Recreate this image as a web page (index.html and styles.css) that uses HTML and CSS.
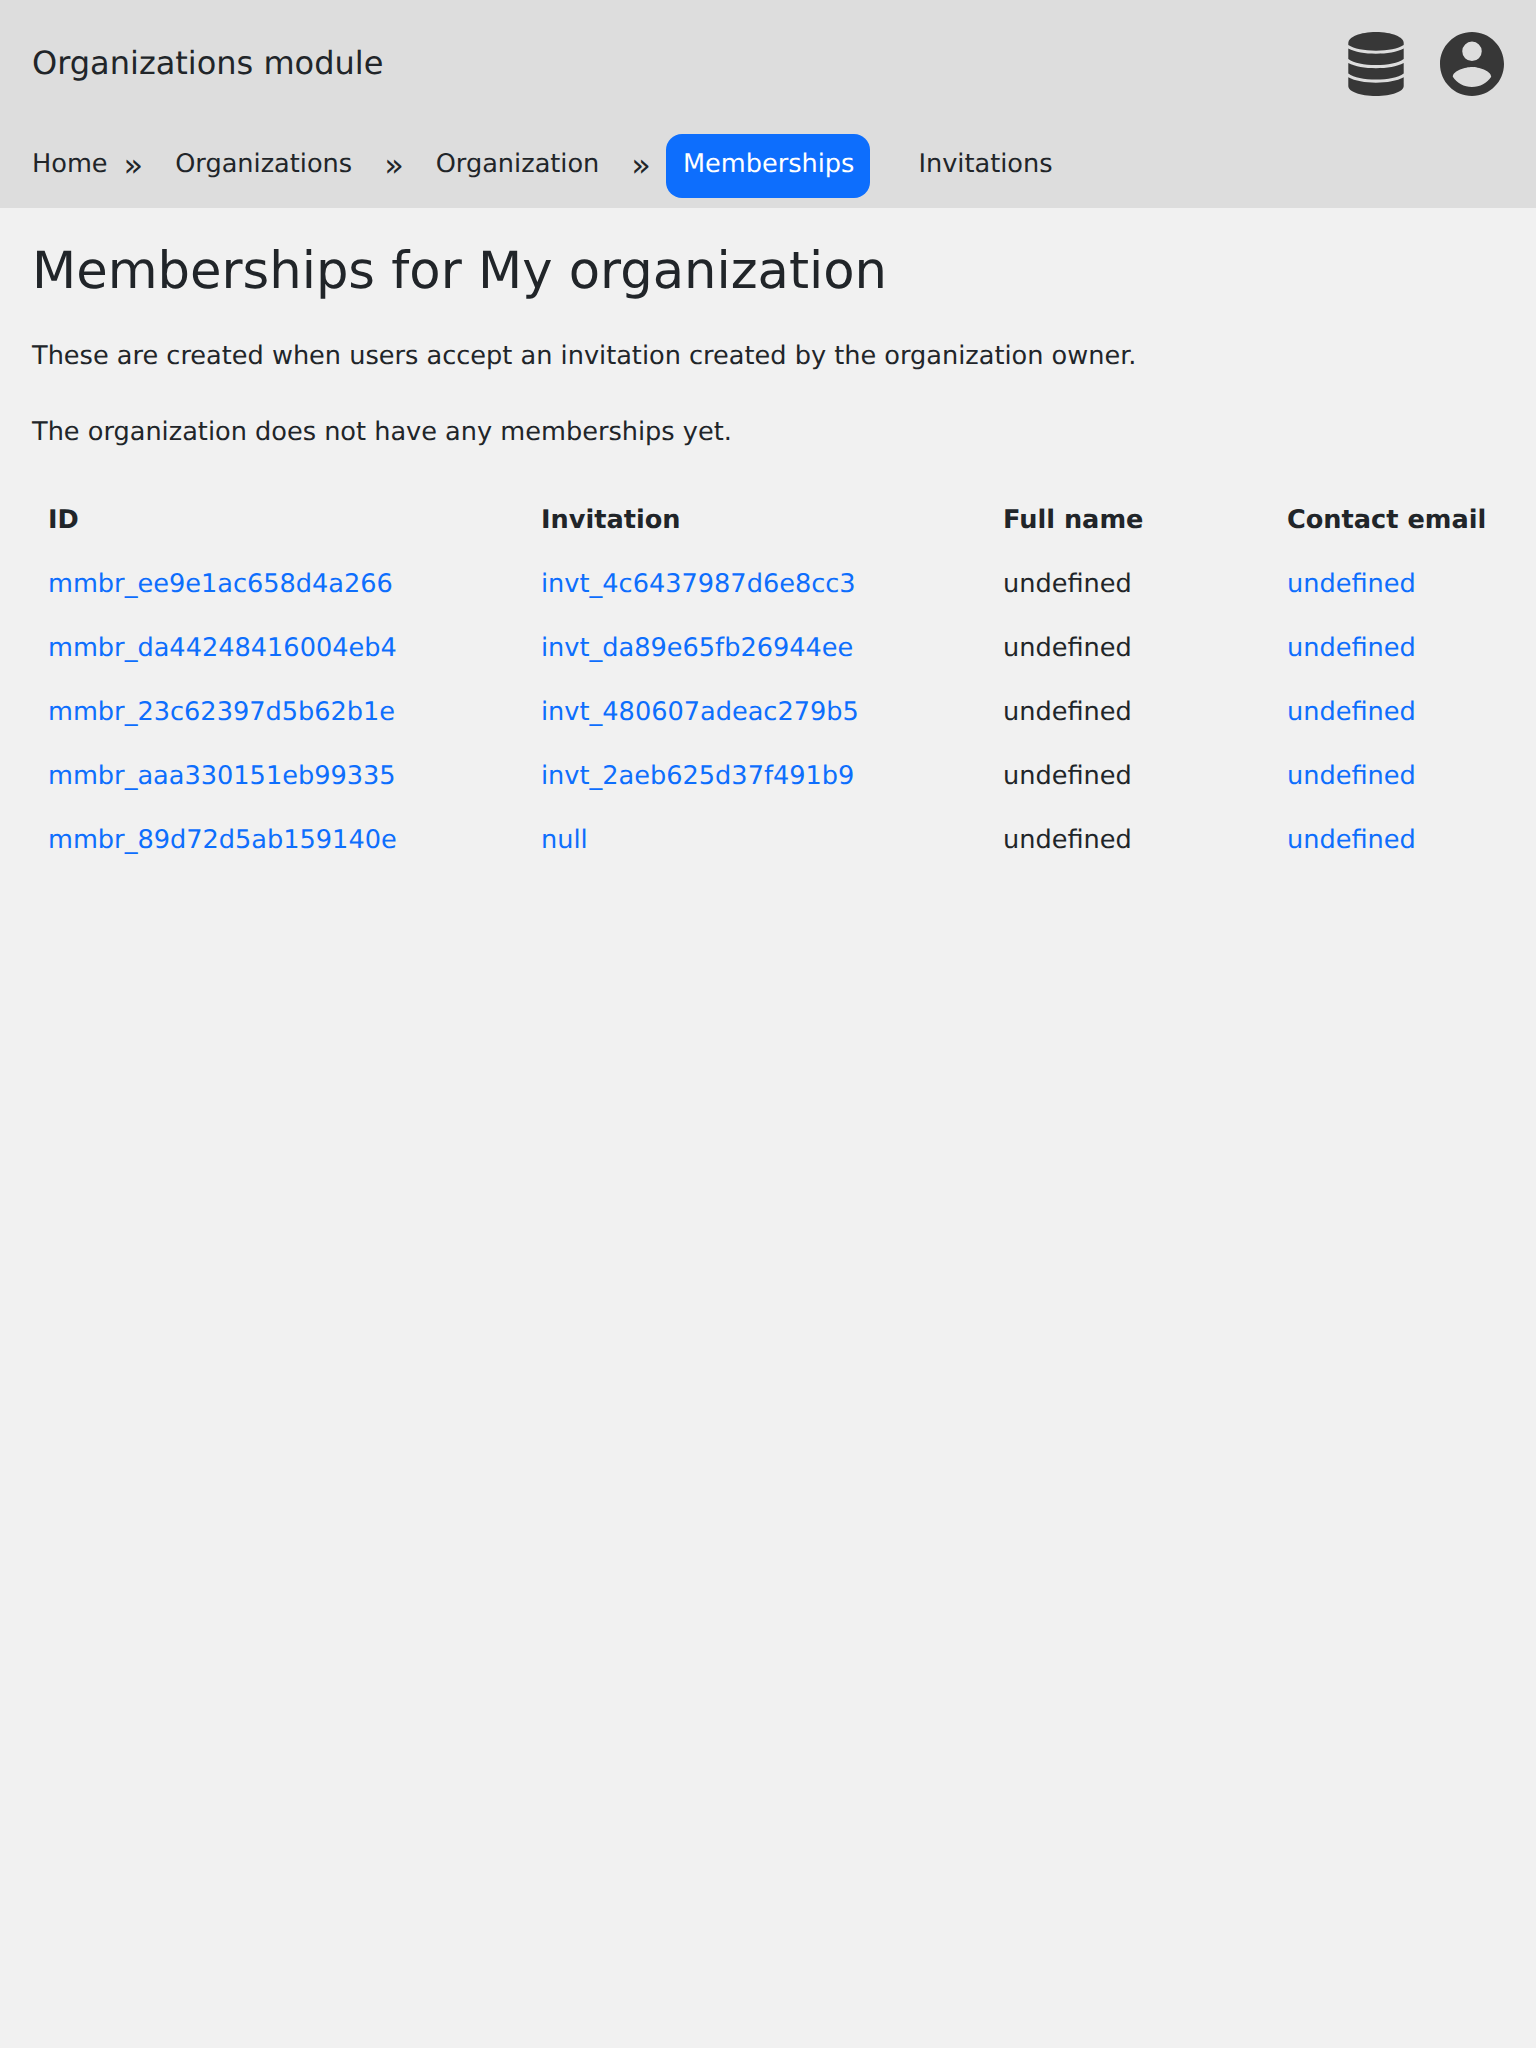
FILE: index.html
```html
<!DOCTYPE html>
<html lang="en">
<head>
<meta charset="utf-8">
<title>Memberships</title>
<link rel="stylesheet" href="styles.css">
</head>
<body>
<header class="header">
  <div class="topbar">
    <span class="app-title">Organizations module</span>
    <div class="actions">
      <a class="icon" aria-label="Data"><svg viewBox="0 0 64 64"><path d="M4.300 11C4.300 5 16 0 32 0S59.700 5 59.700 11V13C54 16.700 44 18.700 32 18.700S10 16.700 4.300 13Z"/><path d="M4.300 16.500C11 20 21 21.700 32 21.700S53 20 59.700 16.500V27C54 31 44 33 32 33S10 31 4.300 27Z"/><path d="M4.300 31C11 34.500 21 36.200 32 36.200S53 34.500 59.700 31V41.500C54 45.500 44 47.500 32 47.500S10 45.500 4.300 41.500Z"/><path d="M4.300 45.300C11 49 21 50.700 32 50.700S53 49 59.700 45.300V54C59.700 59.500 48 64 32 64S4.300 59.500 4.300 54Z"/></svg></a>
      <a class="icon" aria-label="Account"><svg viewBox="2 2 20 20"><path d="M12 2C6.480 2 2 6.480 2 12s4.480 10 10 10 10-4.480 10-10S17.520 2 12 2zm0 3a3 3 0 1 1 0 6.100A3 3 0 0 1 12 5zm0 14.200c-2.500 0-4.710-1.280-6-3.220.03-1.990 4-3.080 6-3.080 1.990 0 5.970 1.090 6 3.080-1.290 1.940-3.500 3.220-6 3.220z"/></svg></a>
    </div>
  </div>
  <nav class="crumbs">
    <a class="crumb crumb-home">Home</a>
    <span class="sep">»</span>
    <a class="crumb">Organizations</a>
    <span class="sep">»</span>
    <a class="crumb">Organization</a>
    <span class="sep">»</span>
    <a class="crumb active">Memberships</a>
    <a class="crumb">Invitations</a>
  </nav>
</header>
<main class="content">
  <h1 class="title">Memberships for My organization</h1>
  <p class="text">These are created when users accept an invitation created by the organization owner.</p>
  <p class="text">The organization does not have any memberships yet.</p>
  <table class="table">
    <colgroup><col class="col-id"><col class="col-invitation"><col class="col-name"><col class="col-email"></colgroup>
    <thead><tr><th>ID</th><th>Invitation</th><th>Full name</th><th>Contact email</th></tr></thead>
    <tbody>
      <tr><td><a class="link">mmbr_ee9e1ac658d4a266</a></td><td><a class="link">invt_4c6437987d6e8cc3</a></td><td>undefined</td><td><a class="link">undefined</a></td></tr>
      <tr><td><a class="link">mmbr_da44248416004eb4</a></td><td><a class="link">invt_da89e65fb26944ee</a></td><td>undefined</td><td><a class="link">undefined</a></td></tr>
      <tr><td><a class="link">mmbr_23c62397d5b62b1e</a></td><td><a class="link">invt_480607adeac279b5</a></td><td>undefined</td><td><a class="link">undefined</a></td></tr>
      <tr><td><a class="link">mmbr_aaa330151eb99335</a></td><td><a class="link">invt_2aeb625d37f491b9</a></td><td>undefined</td><td><a class="link">undefined</a></td></tr>
      <tr><td><a class="link">mmbr_89d72d5ab159140e</a></td><td><a class="link">null</a></td><td>undefined</td><td><a class="link">undefined</a></td></tr>
    </tbody>
  </table>
</main>
</body>
</html>
```

FILE: styles.css
```css
* { box-sizing: border-box; }
body {
  margin: 0;
  min-height: 100vh;
  background: #f1f1f1;
  color: #212529;
  font: 25.6px/32px "DejaVu Sans", sans-serif;
  text-rendering: geometricPrecision;
}
.header { height: 208px; background: #ddd; }
.topbar {
  display: flex;
  justify-content: space-between;
  height: 128px;
  padding: 32px;
}
.app-title { font-size: 32px; line-height: 62px; }
.actions { display: flex; gap: 32px; }
.icon, .icon svg { display: block; width: 64px; height: 64px; }
.icon svg { fill: #373737; }
.crumbs { display: flex; padding: 6px 16px 0; white-space: nowrap; }
.crumb { height: 64px; padding: 0 16px; line-height: 60px; border-radius: 16px; }
.sep { height: 64px; margin: 0 16px; font-size: 32px; line-height: 62px; }
.crumb-home + .sep { margin-left: 0; }
.active { margin: 0 32px 0 -1px; padding-left: 17px; background: #0d6efd; color: #fff; }
.content { padding: 31px 32px 32px; }
.title { margin: 0 0 37px; font-size: 51.2px; font-weight: 400; line-height: 64px; }
.text { margin: 0 0 44px; }
.text + .table { margin-top: -4px; }
.table {
  width: 100%;
  table-layout: fixed;
  border-collapse: collapse;
}
.col-id { width: 493px; }
.col-invitation { width: 462px; }
.col-name { width: 284px; }
.col-email { width: 233px; }
th, td { height: 64px; padding: 0 16px; text-align: left; white-space: nowrap; }
.link { color: #0d6efd; }
```
